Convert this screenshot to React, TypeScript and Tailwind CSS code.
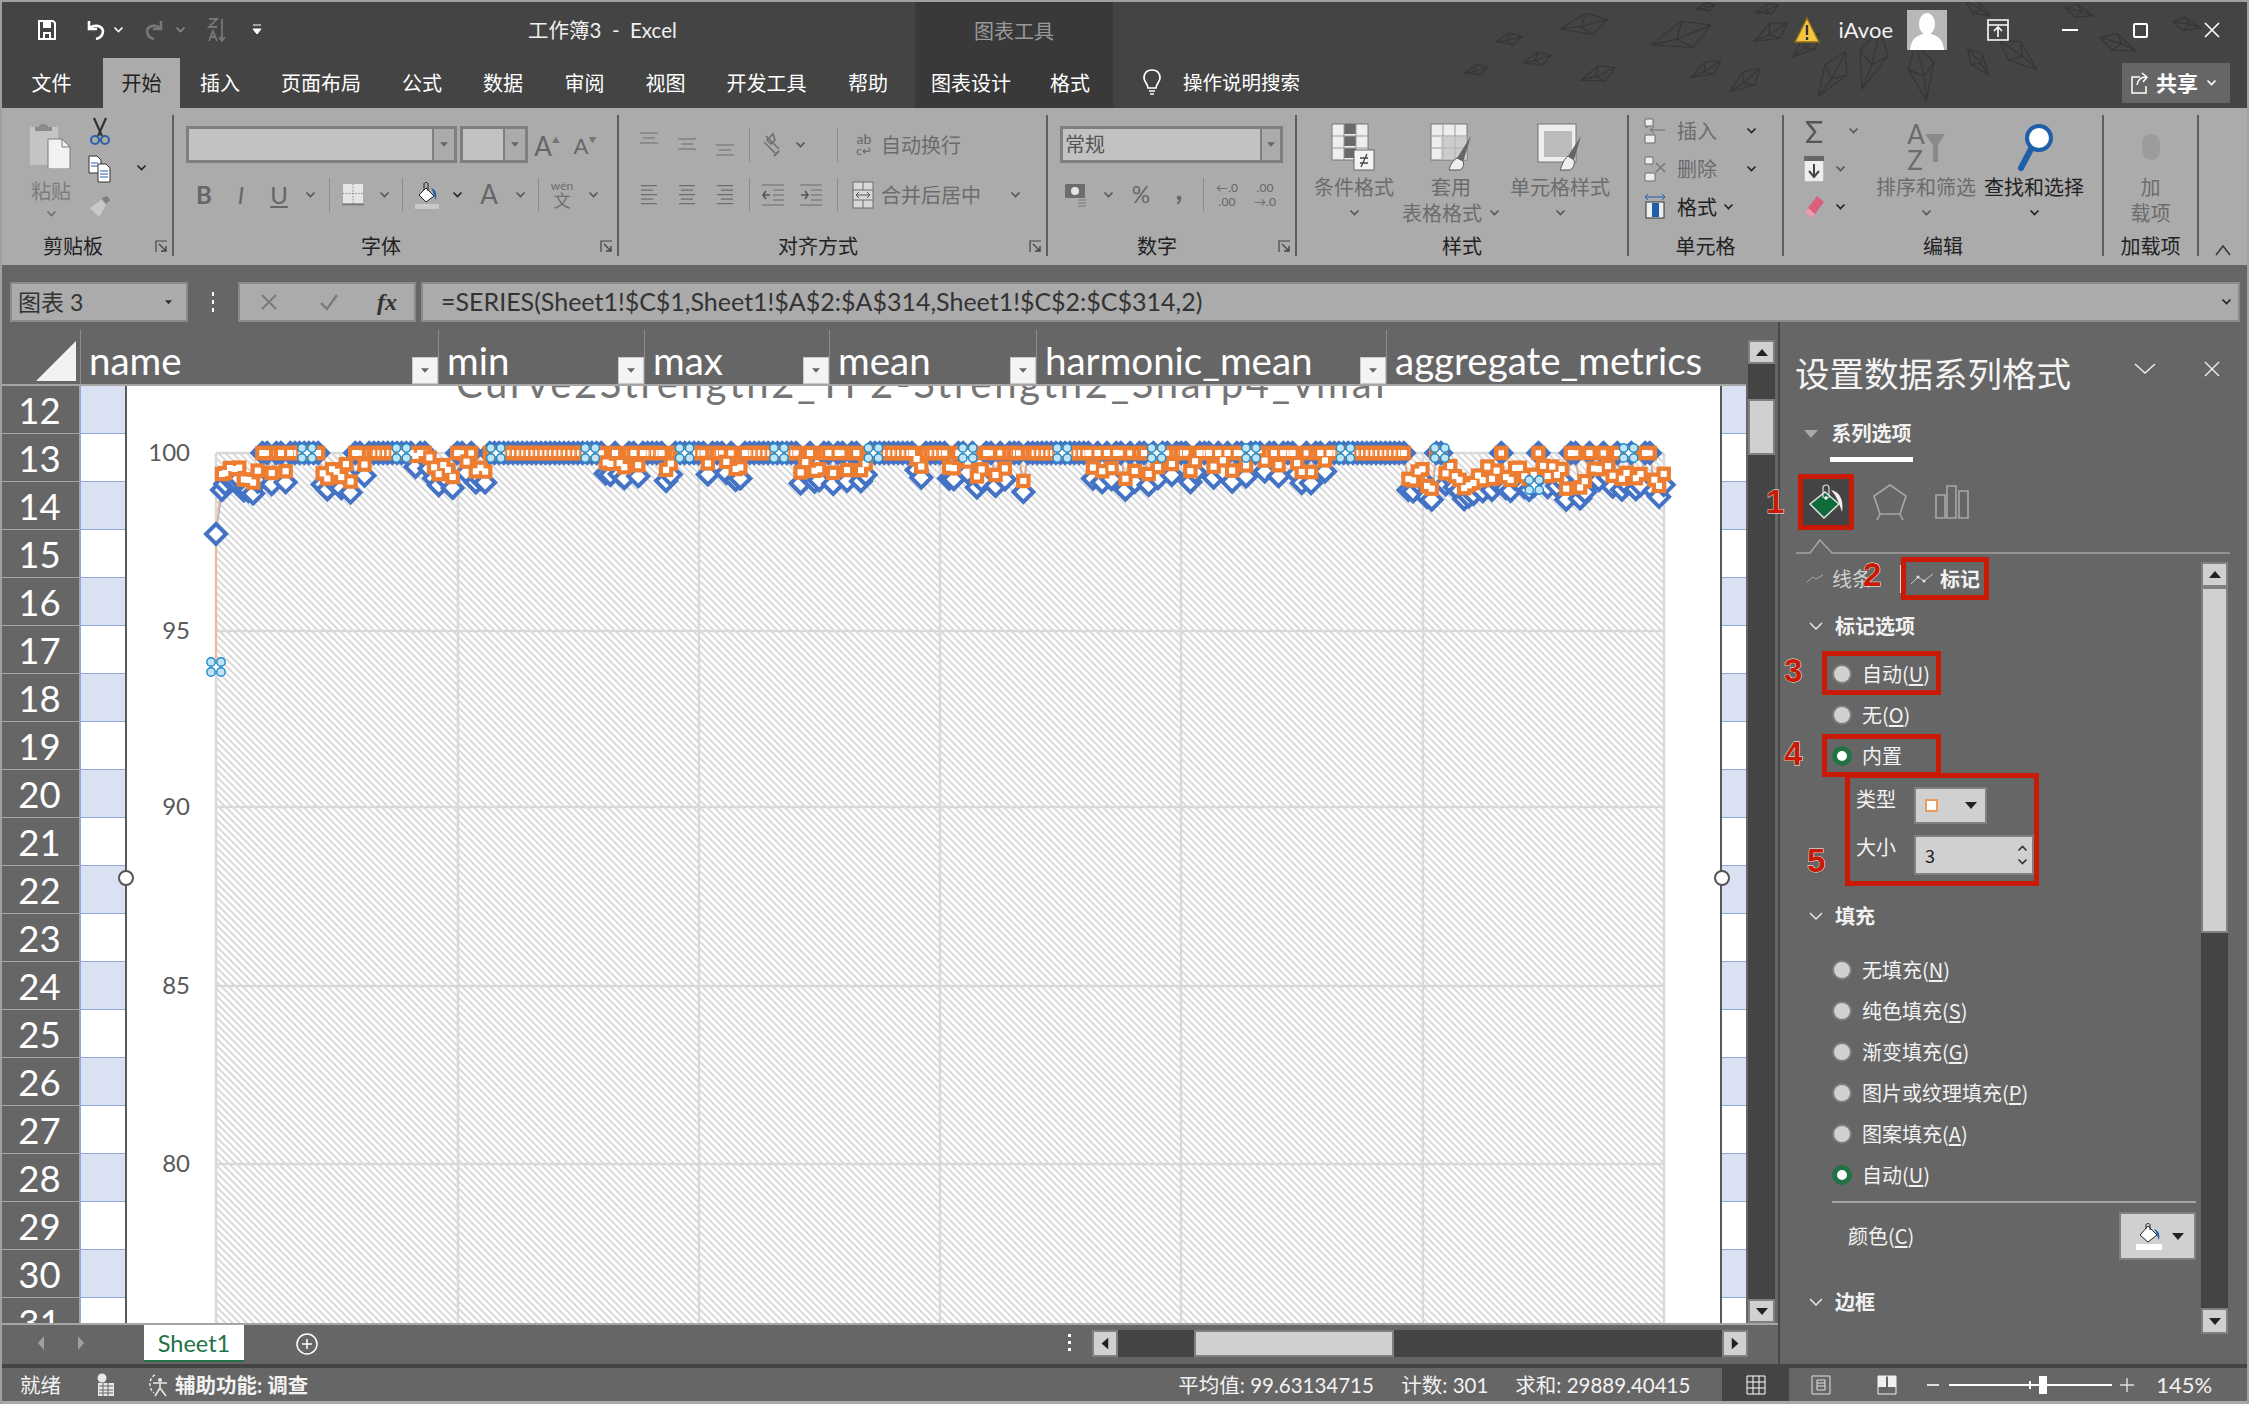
import type { ReactNode } from "react";

const DISABLED = "#6c6c6c";

const rowNumbers = Array.from({ length: 20 }, (_, i) => 12 + i);

const columns = [
  { name: "name", width: "w-[358px]", filter: true },
  { name: "min", width: "w-[206px]", filter: true },
  { name: "max", width: "w-[185px]", filter: true },
  { name: "mean", width: "w-[207px]", filter: true },
  { name: "harmonic_mean", width: "w-[350px]", filter: true },
  { name: "aggregate_metrics", width: "w-[360px]", filter: false },
];

const fillOptions = ["无填充(N)", "纯色填充(S)", "渐变填充(G)", "图片或纹理填充(P)", "图案填充(A)"];

// where the series dips below 100, in page pixels: [from, to, chance, max drop]
const dips: [number, number, number, number][] = [
  [222, 294, 0.75, 30],
  [318, 366, 0.6, 30],
  [413, 430, 0.3, 8],
  [430, 488, 0.55, 24],
  [602, 674, 0.45, 18],
  [695, 760, 0.45, 18],
  [796, 875, 0.5, 20],
  [889, 975, 0.45, 16],
  [975, 1032, 0.55, 30],
  [1083, 1176, 0.45, 26],
  [1190, 1334, 0.4, 20],
  [1398, 1664, 0.7, 36],
];

const rnd = (i: number) => {
  const v = Math.sin(i * 12.9898) * 43758.5453;
  return v - Math.floor(v);
};

const orange: [number, number][] = [];
const blue: [number, number][] = [];
for (let i = 0; i < 313; i++) {
  const x = 216 + i * 4.64;
  const dip = dips.find((d) => x >= d[0] && x <= d[1]);
  const drop = dip && rnd(i) < dip[2] ? dip[3] * (0.35 + 0.65 * rnd(i + 500)) : 0;
  orange.push([x, 453 + drop]);
  blue.push([x, 453 + (drop > 0 ? drop + 11 : 0)]);
}
blue[0] = [216, 534];
blue[1] = [222, 490];
orange[0] = [216, 534];
orange[1] = [222, 474];

const handleGroups = [[216, 667], ...Array.from({ length: 15 }, (_, k) => {
  const x = 307 + k * 94.4;
  return [x, k === 13 ? 485 : 453];
})];

// faint theme artwork behind the title bar: x, y, size
const crystals: [number, number, number][] = [
  [1584, 22, 20], [1681, 33, 26], [1509, 37, 11], [1537, 57, 12], [1476, 68, 10], [1598, 72, 15],
  [1706, 67, 14], [1745, 78, 16], [1771, 30, 16], [1806, 43, 15], [1832, 72, 22], [1871, 57, 26],
  [1921, 70, 24], [1978, 60, 14], [2018, 53, 20], [2118, 42, 16], [2079, 10, 12], [1978, 7, 12],
  [1767, 7, 10], [1706, 5, 8], [2187, 23, 12],
];

function Chev({ c = "#555555" }: { c?: string }) {
  return (
    <svg width="11" height="8" viewBox="0 0 11 8" className="shrink-0">
      <path d="M1.5 1.5 L5.5 5.5 L9.5 1.5" fill="none" stroke={c} strokeWidth="1.6" />
    </svg>
  );
}

function DownTri({ c = "#222222", w = 12 }: { c?: string; w?: number }) {
  return (
    <svg width={w} height={w / 2 + 1} viewBox="0 0 12 7" className="shrink-0">
      <path d="M0 0 H12 L6 7 Z" fill={c} />
    </svg>
  );
}

function Launcher({ c = "#444444" }: { c?: string }) {
  return (
    <svg width="13" height="13" viewBox="0 0 13 13" className="shrink-0">
      <path d="M1 12 V1 H12" fill="none" stroke={c} strokeWidth="1.2" />
      <path d="M4 4 L11 11 M11 6 V11 H6" fill="none" stroke={c} strokeWidth="1.4" />
    </svg>
  );
}

function AlignIcon({ kind, c = "#6c6c6c" }: { kind: "l" | "c" | "r"; c?: string }) {
  const rows = [
    [0, 16],
    [kind === "l" ? 0 : kind === "c" ? 2 : 4, 12],
    [0, 16],
    [kind === "l" ? 0 : kind === "c" ? 2 : 4, 12],
    [0, 16],
  ];
  return (
    <svg width="18" height="22" viewBox="0 0 18 22">
      {rows.map((r, i) => (
        <rect key={i} x={r[0] + 1} y={1 + i * 4.5} width={r[1]} height="1.2" fill={c} />
      ))}
    </svg>
  );
}

function VAlign({ offset }: { offset: number }) {
  return (
    <svg width="20" height="14" viewBox="0 0 20 14" style={{ marginTop: offset }}>
      <path d="M1 1 H19 M4 6 H16 M1 11 H19" stroke={DISABLED} strokeWidth="1.2" />
    </svg>
  );
}

function Cell({ className, children }: { className: string; children: ReactNode }) {
  return <div className={`flex shrink-0 items-center justify-center ${className}`}>{children}</div>;
}

function VRule() {
  return <div className="h-[34px] w-px shrink-0 bg-[#8c8c8c]" />;
}

function Group({ className, label, labelClass, launcher, children }: {
  className: string;
  label: string;
  labelClass?: string;
  launcher?: boolean;
  children: ReactNode;
}) {
  return (
    <div className={`flex h-full shrink-0 flex-col border-r-2 border-[#5e5e5e] ${className}`}>
      <div className="h-[121px]">{children}</div>
      <div className={`flex h-[20px] items-center text-[20px] leading-[20px] text-[#222222] ${labelClass ?? "justify-center"}`}>
        <span className="whitespace-nowrap">{label}</span>
        {launcher && (
          <span className="mr-[4px] ml-auto">
            <Launcher />
          </span>
        )}
      </div>
    </div>
  );
}

function BigButton({ className, lines, icon, dark }: {
  className: string;
  lines: ReactNode[];
  icon: ReactNode;
  dark?: boolean;
}) {
  return (
    <div className={`flex shrink-0 flex-col items-center pt-[8px] ${className}`}>
      <div className="flex h-[48px] items-center justify-center">{icon}</div>
      <div className={`mt-[3px] flex flex-col items-center text-[20px] leading-[26px] ${dark ? "text-[#222222]" : "text-[#6c6c6c]"}`}>
        {lines.map((l, i) => (
          <div key={i} className="flex h-[26px] items-center whitespace-nowrap">{l}</div>
        ))}
      </div>
    </div>
  );
}

function Combo({ className, children, split = "w-[22px]" }: { className: string; children?: ReactNode; split?: string }) {
  return (
    <div className={`flex h-[37px] shrink-0 border-[3px] border-[#7f7f7f] bg-[#c2c2c2] ${className}`}>
      <div className="flex-1 pl-[2px] text-[20px] leading-[31px] text-[#555555]">{children}</div>
      <div className={`flex items-center justify-center border-l-2 border-[#7f7f7f] bg-[#ababab] ${split}`}>
        <DownTri c="#666666" w={8} />
      </div>
    </div>
  );
}

function PaperIcon({ children }: { children: ReactNode }) {
  return (
    <svg width="48" height="50" viewBox="0 0 48 50">
      <rect x="4" y="2" width="36" height="36" fill="#eeeeee" stroke="#777777" />
      <path d="M4 14 H40 M4 26 H40 M16 2 V38 M28 2 V38" stroke="#999999" />
      {children}
    </svg>
  );
}

function Crystals() {
  return (
    <svg width="760" height="108" viewBox="1450 0 760 108" className="pointer-events-none absolute top-0 left-[1450px]">
      {crystals.map(([x, y, s], i) => {
        const deg = (Math.atan2(x - 1900, y + 40) * -180) / Math.PI;
        return (
          <g
            key={i}
            transform={`translate(${x} ${y}) rotate(${deg}) scale(${s / 20})`}
            fill="none"
            stroke="#363636"
            strokeWidth={24 / s}
          >
            <path d="M0 -24 L12 -6 L0 24 L-10 -4 Z M0 -24 L2 4 L0 24 M-10 -4 L2 4 L12 -6" />
          </g>
        );
      })}
    </svg>
  );
}

function TitleBar() {
  return (
    <div className="relative flex h-[56px] shrink-0 items-center text-white">
      <div className="flex h-full w-[915px] shrink-0 items-center">
        <Cell className="ml-[36px] w-[22px]">
          <svg width="20" height="22" viewBox="0 0 20 22">
            <path d="M2 2 H16 L18 4 V20 H2 Z" fill="none" stroke="#fff" strokeWidth="2" />
            <path d="M6 3 H14 V9 H6 Z" fill="#fff" />
            <path d="M7 20 V14 H13 V20" fill="none" stroke="#fff" strokeWidth="2" />
          </svg>
        </Cell>
        <Cell className="ml-[25px] w-[24px]">
          <svg width="24" height="24" viewBox="0 0 24 24">
            <path d="M6 3 V11 H14 M6 11 C10 6 19 7 20 13 C20 17 17 20 13 21" fill="none" stroke="#fff" strokeWidth="2.6" />
          </svg>
        </Cell>
        <Cell className="ml-[3px] w-[16px]"><Chev c="#ffffff" /></Cell>
        <Cell className="ml-[16px] w-[26px]">
          <svg width="24" height="24" viewBox="0 0 24 24">
            <path d="M18 3 V11 H10 M18 11 C14 6 5 7 4 13 C4 17 7 20 11 21" fill="none" stroke="#777777" strokeWidth="2.6" />
          </svg>
        </Cell>
        <Cell className="ml-[4px] w-[16px]"><Chev c="#888888" /></Cell>
        <Cell className="ml-[17px] w-[24px]">
          <svg width="22" height="26" viewBox="0 0 22 26">
            <path d="M3 2 H11 L3 10 H11 M3 24 L7 14 L11 24 M5 20 H9 M16 2 V24 M13 20 L16 24 L19 20" fill="none" stroke="#777777" strokeWidth="1.8" />
          </svg>
        </Cell>
        <Cell className="ml-[22px] w-[12px]">
          <svg width="10" height="12" viewBox="0 0 10 12">
            <path d="M1 1 H9 M1 5 H9 L5 10 Z" fill="#fff" stroke="#fff" strokeWidth="1" />
          </svg>
        </Cell>
        <span className="ml-[265px] text-[20.5px] whitespace-nowrap text-[#f0f0f0]">工作簿3&nbsp; -&nbsp; Excel</span>
      </div>
      <div className="flex h-full w-[198px] shrink-0 items-center justify-center rounded-t-[1px] bg-[#393939] pt-[2px] text-[20px] text-[#9a9a9a]">
        图表工具
      </div>
      <div className="flex-1" />
      <svg width="30" height="30" viewBox="0 0 30 30" className="mr-[17px]">
        <path d="M15 3 L27 27 H3 Z" fill="#f5c542" stroke="#8a6d1a" strokeWidth="1.5" />
        <path d="M15 10 V20 M15 22 V25" stroke="#333" strokeWidth="2.4" />
      </svg>
      <span className="text-[22px] leading-[26px] whitespace-nowrap text-[#f2f2f2]">iAvoe</span>
      <div className="ml-[14px] flex h-[40px] w-[40px] items-end justify-center overflow-hidden bg-[#b8b8b8]">
        <svg width="36" height="38" viewBox="0 0 36 38">
          <ellipse cx="18" cy="12" rx="8" ry="11" fill="#fff" />
          <path d="M1 38 C2 26 8 24 14 22 H22 C28 24 34 26 35 38 Z" fill="#fff" />
        </svg>
      </div>
      <Cell className="ml-[38px] w-[26px]">
        <svg width="24" height="24" viewBox="0 0 24 24">
          <path d="M2 2 H22 V22 H2 Z M2 7 H22" fill="none" stroke="#fff" strokeWidth="1.6" />
          <path d="M12 19 V10 M8 13 L12 9 L16 13" fill="none" stroke="#fff" strokeWidth="1.6" />
        </svg>
      </Cell>
      <Cell className="ml-[48px] w-[22px]">
        <div className="h-[2px] w-[16px] bg-white" />
      </Cell>
      <Cell className="ml-[48px] w-[22px]">
        <div className="h-[15px] w-[15px] rounded-[2px] border-2 border-white" />
      </Cell>
      <Cell className="mr-[26px] ml-[50px] w-[22px]">
        <svg width="18" height="18" viewBox="0 0 18 18">
          <path d="M2 2 L16 16 M16 2 L2 16" stroke="#fff" strokeWidth="1.6" />
        </svg>
      </Cell>
    </div>
  );
}

function TabBar() {
  const tab = "flex h-full shrink-0 items-center justify-center text-[20px] leading-[24px] text-white";
  return (
    <div className="relative flex h-[50px] shrink-0">
      <div className={`${tab} w-[103px]`}>文件</div>
      <div className={`${tab} w-[77px] bg-[#ababab] !text-[#222222]`}>开始</div>
      <div className={`${tab} w-[80px]`}>插入</div>
      <div className={`${tab} w-[122px]`}>页面布局</div>
      <div className={`${tab} w-[80px]`}>公式</div>
      <div className={`${tab} w-[82px]`}>数据</div>
      <div className={`${tab} w-[81px]`}>审阅</div>
      <div className={`${tab} w-[81px]`}>视图</div>
      <div className={`${tab} w-[121px]`}>开发工具</div>
      <div className={`${tab} w-[82px]`}>帮助</div>
      <div className="w-[6px] shrink-0" />
      <div className="flex h-full shrink-0 bg-[#393939]">
        <div className={`${tab} w-[112px]`}>图表设计</div>
        <div className={`${tab} w-[86px]`}>格式</div>
      </div>
      <svg width="22" height="30" viewBox="0 0 22 30" className="mt-[10px] ml-[28px] shrink-0">
        <path d="M11 2 C5 2 3 6 3 10 C3 14 7 16 7 20 H15 C15 16 19 14 19 10 C19 6 17 2 11 2 Z M8 23 H14 M9 26 H13" fill="none" stroke="#fff" strokeWidth="1.7" />
      </svg>
      <span className="ml-[20px] self-center text-[19.5px] leading-[24px] whitespace-nowrap text-white">操作说明搜索</span>
      <div className="flex-1" />
      <div className="mt-[5px] mr-[19px] flex h-[40px] w-[108px] items-center bg-[#666666] pl-[8px]">
        <svg width="20" height="24" viewBox="0 0 20 24">
          <path d="M10 6 H2 V22 H16 V15 M7 14 C8 8 11 6 16 6 M12 2 L17 6 L13 11" fill="none" stroke="#fff" strokeWidth="1.5" />
        </svg>
        <span className="ml-[6px] text-[21px] leading-[24px] font-bold text-white">共享</span>
        <span className="ml-[8px]"><Chev c="#ffffff" /></span>
      </div>
    </div>
  );
}

function Ribbon() {
  const smallText = "text-[20px] leading-[24px] text-[#6c6c6c] whitespace-nowrap";
  return (
    <div className="flex h-[157px] shrink-0 bg-[#ababab] pt-[7px] pb-[9px]">
      <Group className="w-[174px]" label="剪贴板" labelClass="pl-[43px]" launcher>
        <div className="flex">
          <div className="ml-[28px] flex w-[46px] flex-col items-center pt-[8px]">
            <svg width="44" height="46" viewBox="0 0 44 46">
              <rect x="1" y="4" width="28" height="38" rx="1" fill="#c4c4c4" />
              <path d="M10 4 C10 0 19 0 19 4 H23 V8 H6 V4 Z" fill="#8a8a8a" />
              <path d="M19 16 H33 L41 24 V46 H19 Z" fill="#f2f2f2" stroke="#7a7a7a" />
              <path d="M33 16 V24 H41" fill="none" stroke="#7a7a7a" />
            </svg>
            <span className="mt-[9px] text-[20px] leading-[26px] text-[#7c7c7c]">粘贴</span>
            <span className="mt-[6px]"><Chev c="#6e6e6e" /></span>
          </div>
          <div className="ml-[4px] flex w-[44px] flex-col">
            <Cell className="-mt-[3px] h-[38px]">
              <svg width="24" height="30" viewBox="0 0 24 30">
                <path d="M6 2 L14 20 M18 2 L10 20" stroke="#333" strokeWidth="2.2" />
                <circle cx="7" cy="24" r="4" fill="none" stroke="#2a5fa5" strokeWidth="2" />
                <circle cx="17" cy="24" r="4" fill="none" stroke="#2a5fa5" strokeWidth="2" />
              </svg>
            </Cell>
            <Cell className="h-[38px]">
              <svg width="24" height="28" viewBox="0 0 24 28">
                <path d="M1 1 H9 L13 5 V18 H1 Z" fill="#fff" stroke="#333" />
                <path d="M3 8 H10 M3 11 H10" stroke="#2a5fa5" />
                <path d="M10 9 H18 L22 13 V27 H10 Z" fill="#fff" stroke="#333" />
                <path d="M12 16 H20 M12 19 H20 M12 22 H20" stroke="#2a5fa5" />
              </svg>
            </Cell>
            <Cell className="h-[38px]">
              <svg width="24" height="24" viewBox="0 0 24 24">
                <path d="M14 3 L19 1 L22 5 L18 9 Z" fill="#7c7c7c" />
                <path d="M13 5 L18 10 L11 22 L2 13 Z" fill="#c9c9c9" />
              </svg>
            </Cell>
          </div>
          <Cell className="mt-[34px] ml-[10px] h-[38px] w-[18px]"><Chev c="#222222" /></Cell>
        </div>
      </Group>

      <Group className="w-[445px]" label="字体" labelClass="pl-[187px]" launcher>
        <div className="pt-[11px]">
          <div className="flex h-[37px] items-center pl-[12px]">
            <Combo className="w-[271px]" />
            <Combo className="ml-[3px] w-[68px]" />
            <Cell className="w-[38px] pt-[2px]">
              <span className="text-[26px] leading-[26px] text-[#666666]">A</span>
              <span className="-mt-[12px] text-[8px] text-[#777777]">▲</span>
            </Cell>
            <Cell className="w-[38px] pt-[2px]">
              <span className="text-[22px] leading-[26px] text-[#666666]">A</span>
              <span className="-mt-[12px] text-[8px] text-[#777777]">▼</span>
            </Cell>
          </div>
          <div className="mt-[13px] flex h-[37px] items-center pl-[12px]">
            <Cell className="w-[36px] text-[24px] font-bold text-[#666666]">B</Cell>
            <Cell className="w-[38px] text-[24px] text-[#666666] italic">I</Cell>
            <Cell className="w-[38px] text-[24px] text-[#666666] underline underline-offset-2">U</Cell>
            <Cell className="w-[24px]"><Chev /></Cell>
            <div className="w-[7px] shrink-0" />
            <VRule />
            <Cell className="w-[46px]">
              <svg width="22" height="24" viewBox="0 0 22 24">
                <rect x="1" y="1" width="20" height="19" fill="#e6e6e6" />
                <path d="M1 10.5 H21 M11 1 V20" stroke="#8a8a8a" strokeDasharray="1.5 1.5" />
                <path d="M0 21.5 H22" stroke="#777" strokeWidth="1.5" />
              </svg>
            </Cell>
            <Cell className="w-[16px]"><Chev /></Cell>
            <div className="w-[10px] shrink-0" />
            <VRule />
            <Cell className="w-[48px]">
              <svg width="26" height="28" viewBox="0 0 26 28">
                <path d="M12 7 L20 15 L12 21 L5 14 Z" fill="#fff" stroke="#222" />
                <path d="M10 9 V3 C10 1 14 1 14 3 V10" fill="none" stroke="#222" />
                <path d="M17 7 C22 9 23 12 22 19 C20 15 20 12 17 7" fill="#1f5fa8" />
                <rect x="1" y="23" width="24" height="5" fill="#c9c9c9" />
              </svg>
            </Cell>
            <Cell className="w-[12px]"><Chev c="#222222" /></Cell>
            <Cell className="w-[52px] text-[26px] text-[#666666]">A</Cell>
            <Cell className="w-[10px]"><Chev /></Cell>
            <div className="w-[13px] shrink-0" />
            <VRule />
            <Cell className="w-[46px]">
              <div className="flex flex-col items-center text-[#6e6e6e]">
                <span className="text-[12px] leading-[12px]">wén</span>
                <span className="text-[17px] leading-[17px]">文</span>
              </div>
            </Cell>
            <Cell className="w-[16px]"><Chev /></Cell>
          </div>
        </div>
      </Group>

      <Group className="w-[429px]" label="对齐方式" labelClass="pl-[159px]" launcher>
        <div className="pt-[11px]">
          <div className="flex h-[37px] items-center pl-[11px]">
            <Cell className="w-[38px] self-start"><VAlign offset={6} /></Cell>
            <Cell className="w-[38px] self-start"><VAlign offset={12} /></Cell>
            <Cell className="w-[38px] self-start"><VAlign offset={18} /></Cell>
            <div className="w-[5px] shrink-0" />
            <VRule />
            <Cell className="w-[46px]">
              <svg width="24" height="26" viewBox="0 0 24 26">
                <path d="M5 4 L18 17 M3 10 L14 21" stroke="#6c6c6c" strokeWidth="1.4" />
                <path d="M6 8 L12 2 L14 8 L10 12 Z" fill="none" stroke="#6c6c6c" strokeWidth="1.5" />
                <path d="M18 19 L13 24" stroke="#6c6c6c" strokeWidth="1.8" />
              </svg>
            </Cell>
            <Cell className="w-[8px]"><Chev /></Cell>
            <div className="w-[33px] shrink-0" />
            <VRule />
            <Cell className="ml-[15px] w-[22px] flex-col">
              <span className="text-[14px] leading-[13px] text-[#666666]">ab</span>
              <span className="text-[12px] leading-[12px] text-[#666666]">c↵</span>
            </Cell>
            <span className={`ml-[6px] ${smallText}`}>自动换行</span>
          </div>
          <div className="mt-[13px] flex h-[37px] items-center pl-[11px]">
            <Cell className="w-[38px]"><AlignIcon kind="l" /></Cell>
            <Cell className="w-[38px]"><AlignIcon kind="c" /></Cell>
            <Cell className="w-[38px]"><AlignIcon kind="r" /></Cell>
            <div className="w-[5px] shrink-0" />
            <VRule />
            <Cell className="ml-[4px] w-[38px]">
              <svg width="22" height="22" viewBox="0 0 22 22">
                <path d="M0 1 H22 M11 6 H22 M11 11 H22 M11 16 H22 M0 21 H22" stroke="#6c6c6c" strokeWidth="1.2" />
                <path d="M8 11 H1 M4 7 L1 11 L4 15" fill="none" stroke="#555" strokeWidth="1.6" />
              </svg>
            </Cell>
            <Cell className="w-[38px]">
              <svg width="22" height="22" viewBox="0 0 22 22">
                <path d="M0 1 H22 M11 6 H22 M11 11 H22 M11 16 H22 M0 21 H22" stroke="#6c6c6c" strokeWidth="1.2" />
                <path d="M1 11 H8 M5 7 L8 11 L5 15" fill="none" stroke="#555" strokeWidth="1.6" />
              </svg>
            </Cell>
            <div className="w-[7px] shrink-0" />
            <VRule />
            <Cell className="ml-[14px] w-[22px]">
              <svg width="22" height="28" viewBox="0 0 22 28">
                <rect x="1" y="1" width="20" height="26" fill="#d8d8d8" stroke="#6c6c6c" />
                <path d="M1 9 H21 M1 19 H21 M11 1 V9 M11 19 V27" stroke="#6c6c6c" />
                <path d="M4 14 H18 M7 11 L4 14 L7 17 M15 11 L18 14 L15 17" fill="none" stroke="#555" />
              </svg>
            </Cell>
            <span className={`ml-[7px] w-[100px] ${smallText}`}>合并后居中</span>
            <Cell className="ml-[30px] w-[8px]"><Chev /></Cell>
          </div>
        </div>
      </Group>

      <Group className="w-[249px]" label="数字" labelClass="pl-[89px]" launcher>
        <div className="pt-[11px]">
          <div className="flex h-[37px] items-center pl-[12px]">
            <Combo className="w-[223px]" split="w-[20px]">常规</Combo>
          </div>
          <div className="mt-[13px] flex h-[37px] items-center pl-[12px]">
            <Cell className="w-[32px]">
              <svg width="24" height="24" viewBox="0 0 24 24">
                <rect x="1" y="1" width="20" height="14" rx="1" fill="#6c6c6c" />
                <circle cx="11" cy="8" r="4" fill="#e4e4e4" />
                <path d="M14 17 H22 M14 20 H22 M14 23 H22" stroke="#8a8a8a" strokeWidth="1.6" />
              </svg>
            </Cell>
            <Cell className="w-[32px]"><Chev /></Cell>
            <Cell className="w-[34px] text-[23px] text-[#666666]">%</Cell>
            <Cell className="-mt-[12px] w-[42px] text-[30px] font-bold text-[#666666]">,</Cell>
            <div className="w-[3px] shrink-0" />
            <VRule />
            <Cell className="w-[46px] flex-col text-[12px] leading-[14px] text-[#666666]">
              <span>←.0</span>
              <span>.00</span>
            </Cell>
            <Cell className="w-[30px] flex-col text-[12px] leading-[14px] text-[#666666]">
              <span>.00</span>
              <span>→.0</span>
            </Cell>
          </div>
        </div>
      </Group>

      <Group className="w-[332px]" label="样式">
        <div className="flex pl-[15px]">
          <BigButton
            className="w-[84px]"
            lines={["条件格式", <Chev key="c" />]}
            icon={
              <svg width="48" height="50" viewBox="0 0 48 50">
                <rect x="2" y="2" width="36" height="36" fill="#eeeeee" stroke="#777777" />
                <path d="M14 2 H26 V12 H14 Z M14 14 H26 V24 H14 Z M14 26 H26 V36 H14 Z" fill="#6a6a6a" />
                <path d="M2 14 H38 M2 26 H38 M14 2 V38 M26 2 V38" stroke="#999999" />
                <rect x="24" y="28" width="20" height="20" fill="#f4f4f4" stroke="#666666" />
                <path d="M30 36 H38 M30 41 H38 M37 32 L31 45" stroke="#444" strokeWidth="1.3" />
              </svg>
            }
          />
          <BigButton
            className="w-[110px]"
            lines={[
              "套用",
              <span key="t" className="flex items-center gap-[7px]">表格格式<Chev /></span>,
            ]}
            icon={
              <PaperIcon>
                <rect x="14" y="14" width="26" height="24" fill="#bdbdbd" opacity="0.7" />
                <path d="M44 14 L30 36 L36 40 Z" fill="#666666" />
                <path d="M30 36 C25 39 23 44 22 48 L33 48 C37 46 37 41 36 39 Z" fill="#eeeeee" stroke="#555" />
              </PaperIcon>
            }
          />
          <BigButton
            className="w-[108px]"
            lines={["单元格样式", <Chev key="c" />]}
            icon={
              <svg width="48" height="50" viewBox="0 0 48 50">
                <rect x="2" y="2" width="38" height="38" fill="#eeeeee" stroke="#777777" />
                <rect x="8" y="9" width="28" height="26" fill="#bcbcbc" />
                <path d="M45 14 L32 34 L38 38 Z" fill="#666666" />
                <path d="M32 34 C27 38 26 44 24 48 L34 48 C38 46 39 41 38 38 Z" fill="#eeeeee" stroke="#555" />
              </svg>
            }
          />
        </div>
      </Group>

      <Group className="w-[155px]" label="单元格">
        <div className="-mt-[3px] pl-[15px]">
          <div className="flex h-[38px] items-center">
            <Cell className="w-[22px]">
              <svg width="22" height="26" viewBox="0 0 22 26">
                <path d="M1 1 H9 V8 H1 Z M1 17 H11 V25 H1 Z M1 9 H4" fill="#eeeeee" stroke="#6c6c6c" />
                <path d="M6 12 H21 M10 9 L6 12 L10 15" fill="none" stroke="#6c6c6c" />
              </svg>
            </Cell>
            <span className={`ml-[11px] w-[41px] ${smallText}`}>插入</span>
            <Cell className="ml-[29px] w-[8px]"><Chev c="#222222" /></Cell>
          </div>
          <div className="flex h-[38px] items-center">
            <Cell className="w-[22px]">
              <svg width="22" height="26" viewBox="0 0 22 26">
                <path d="M1 1 H9 V8 H1 Z M1 17 H11 V25 H1 Z" fill="#eeeeee" stroke="#6c6c6c" />
                <path d="M12 7 L21 16 M21 7 L12 16" stroke="#777" strokeWidth="1.5" />
              </svg>
            </Cell>
            <span className={`ml-[11px] w-[41px] ${smallText}`}>删除</span>
            <Cell className="ml-[29px] w-[8px]"><Chev c="#222222" /></Cell>
          </div>
          <div className="flex h-[38px] items-center">
            <Cell className="w-[22px]">
              <svg width="22" height="28" viewBox="0 0 22 28">
                <path d="M1 4 H21 M4 1 L1 4 L4 7 M18 1 L21 4 L18 7" fill="none" stroke="#1f5fa8" />
                <rect x="2" y="9" width="18" height="16" fill="#eeeeee" stroke="#333" />
                <rect x="8" y="10" width="7" height="14" fill="#1f5fa8" />
              </svg>
            </Cell>
            <span className="ml-[11px] text-[20px] leading-[24px] whitespace-nowrap text-[#222222]">格式</span>
            <Cell className="ml-[7px] w-[8px]"><Chev c="#222222" /></Cell>
          </div>
        </div>
      </Group>

      <Group className="w-[320px]" label="编辑">
        <div className="flex">
          <div className="-mt-[3px] w-[88px] pl-[16px]">
            <div className="flex h-[38px] items-center">
              <Cell className="w-[28px] text-[30px] leading-[30px] text-[#555555]">Σ</Cell>
              <Cell className="ml-[21px] w-[8px]"><Chev /></Cell>
            </div>
            <div className="flex h-[38px] items-center">
              <Cell className="w-[28px]">
                <svg width="20" height="26" viewBox="0 0 20 26">
                  <rect x="0" y="0" width="20" height="26" fill="#eeeeee" stroke="#888888" />
                  <rect x="0" y="0" width="20" height="5" fill="#666666" />
                  <path d="M10 8 V20 M5 15 L10 21 L15 15" fill="none" stroke="#444" strokeWidth="2" />
                </svg>
              </Cell>
              <Cell className="ml-[8px] w-[8px]"><Chev /></Cell>
            </div>
            <div className="flex h-[38px] items-center">
              <Cell className="w-[28px]">
                <svg width="22" height="24" viewBox="0 0 22 24">
                  <path d="M14 1 L21 7 L9 23 L2 17 Z" fill="#d9607a" />
                  <path d="M5 13 L12 19 L9 23 L2 17 Z" fill="#e8a0b0" />
                </svg>
              </Cell>
              <Cell className="ml-[8px] w-[8px]"><Chev c="#222222" /></Cell>
            </div>
          </div>
          <BigButton
            className="w-[108px]"
            lines={["排序和筛选", <Chev key="c" />]}
            icon={
              <div className="flex items-center">
                <div className="flex flex-col text-[26px] leading-[26px] text-[#6c6c6c]">
                  <span>A</span>
                  <span>Z</span>
                </div>
                <svg width="20" height="30" viewBox="0 0 20 30">
                  <path d="M0 2 H20 L13 13 V30 H8 V13 Z" fill="#8a8a8a" />
                </svg>
              </div>
            }
          />
          <BigButton
            className="w-[108px]"
            dark
            lines={["查找和选择", <Chev key="c" c="#222222" />]}
            icon={
              <svg width="42" height="50" viewBox="0 0 42 50">
                <circle cx="26" cy="16" r="12" fill="#fff" stroke="#1f5fa8" strokeWidth="4" />
                <path d="M18 27 L8 46" stroke="#1f5fa8" strokeWidth="6" strokeLinecap="round" />
              </svg>
            }
          />
        </div>
      </Group>

      <Group className="w-[95px]" label="加载项">
        <BigButton
          className="w-full"
          lines={["加", "载项"]}
          icon={<div className="h-[26px] w-[18px] rounded-full bg-[#9c9c9c]" />}
        />
      </Group>

      <div className="flex flex-1 items-end justify-center pr-[2px]">
        <svg width="18" height="12" viewBox="0 0 18 12">
          <path d="M2 11 L9 2 L16 11" fill="none" stroke="#333" strokeWidth="1.4" />
        </svg>
      </div>
    </div>
  );
}

function FormulaBar() {
  return (
    <div className="flex h-[57px] shrink-0 items-start pt-[17px] pl-[10px]">
      <div className="flex h-[40px] w-[178px] items-center border-2 border-[#8a8a8a] bg-[#ababab] pr-[14px] pl-[6px] text-[23px] text-[#333333]">
        <span className="flex-1">图表 3</span>
        <DownTri c="#333333" w={7} />
      </div>
      <div className="flex h-[40px] w-[50px] flex-col items-center justify-center gap-[4px]">
        <i className="h-[4px] w-[2px] bg-white" />
        <i className="h-[4px] w-[2px] bg-white" />
        <i className="h-[4px] w-[2px] bg-white" />
      </div>
      <div className="flex h-[40px] w-[178px] items-center border-2 border-[#8a8a8a] bg-[#ababab] text-[#757575]">
        <Cell className="ml-[16px] w-[26px]">
          <svg width="18" height="18" viewBox="0 0 18 18">
            <path d="M2 2 L16 16 M16 2 L2 16" stroke="#7a7a7a" strokeWidth="2" />
          </svg>
        </Cell>
        <Cell className="ml-[34px] w-[26px]">
          <svg width="20" height="18" viewBox="0 0 20 18">
            <path d="M2 10 L8 16 L18 2" fill="none" stroke="#7a7a7a" strokeWidth="2.4" />
          </svg>
        </Cell>
        <Cell className="ml-[32px] w-[26px] font-['Liberation_Serif',serif] text-[24px] font-bold text-[#333333] italic">fx</Cell>
      </div>
      <div className="ml-[5px] flex h-[40px] w-[1819px] items-center border-2 border-[#8a8a8a] bg-[#ababab] pr-[6px] pl-[18px] text-[25px] text-[#333333]">
        <span className="flex-1 whitespace-nowrap">=SERIES(Sheet1!$C$1,Sheet1!$A$2:$A$314,Sheet1!$C$2:$C$314,2)</span>
        <Chev c="#222222" />
      </div>
    </div>
  );
}

function ColumnHeaders() {
  return (
    <div className="flex h-[64px] shrink-0 items-end border-b-2 border-[#a6a6a6] pt-[8px]">
      <div className="flex h-full w-[80px] shrink-0 items-end justify-end pr-[3px] pb-[2px]">
        <svg width="42" height="42" viewBox="0 0 42 42">
          <path d="M41 1 V41 H1 Z" fill="#f2f2f2" />
        </svg>
      </div>
      {columns.map((col) => (
        <div
          key={col.name}
          className={`flex h-full shrink-0 items-end justify-between border-l border-[#8c8c8c] pl-[8px] ${col.width}`}
        >
          <span className="pb-[2px] text-[38.5px] leading-[44px] whitespace-nowrap text-white">{col.name}</span>
          {col.filter && (
            <div className="flex h-[27px] w-[26px] shrink-0 items-center justify-center border border-[#c9c9c9] bg-[#f4f4f6]">
              <DownTri c="#666666" w={8} />
            </div>
          )}
        </div>
      ))}
    </div>
  );
}

function ChartMarkers() {
  const isFlat = (i: number) => orange[i] && orange[i][1] === 453;
  return (
    <>
      <polyline
        points={blue.map((p) => p.join(",")).join(" ")}
        fill="none"
        stroke="#8fa9dc"
        strokeWidth="1.5"
      />
      <polyline
        points={[[216, 667], ...orange].map((p) => p.join(",")).join(" ")}
        fill="none"
        stroke="#f4b183"
        strokeWidth="1.5"
      />
      {blue.map(([x, y], i) => (
        <path
          key={i}
          d={`M${x} ${y - 10} L${x + 10} ${y} L${x} ${y + 10} L${x - 10} ${y} Z`}
          fill="#fff"
          stroke="#4472c4"
          strokeWidth="4"
        />
      ))}
      {orange.slice(1).map(([x, y], i) => (
        <rect key={i} x={x - 5} y={y - 5} width="10" height="10" fill="#fff" stroke="#ed7d31" strokeWidth="4.5" />
      ))}
      {/* white centres: the later squares hide them, so put them back on top */}
      {orange.slice(1).map(([x, y], n) => {
        const i = n + 1;
        if (isFlat(i) && isFlat(i - 1) && isFlat(i + 1)) {
          return <rect key={i} x={x - 1} y={y - 3} width="2" height="6" fill="#fff" />;
        }
        if (isFlat(i) && i % 2 === 1) return null;
        return <rect key={i} x={x - 3} y={y - 3} width="6" height="6" fill="#fff" />;
      })}
      {handleGroups.map(([x, y], i) => (
        <g key={i} fill="#bfe3f7" stroke="#1f8ac8" strokeWidth="1.4">
          <rect x={x - 3} y={y - 3} width="6" height="6" fill="#fff" stroke="none" />
          <circle cx={x - 5} cy={y - 5} r="4.2" />
          <circle cx={x + 5} cy={y - 5} r="4.2" />
          <circle cx={x - 5} cy={y + 5} r="4.2" />
          <circle cx={x + 5} cy={y + 5} r="4.2" />
        </g>
      ))}
    </>
  );
}

function Chart() {
  const gridY = [453, 631, 807, 986, 1164];
  const gridX = [216, 458, 699, 940, 1181, 1423, 1664];
  const axis = [
    [453, "100"],
    [631, "95"],
    [807, "90"],
    [986, "85"],
    [1164, "80"],
  ] as const;
  return (
    <div className="absolute top-0 left-[125px] h-[937px] w-[1597px]">
      <svg width="1597" height="937" viewBox="125 386 1597 937" className="block overflow-visible">
        <defs>
          <pattern id="hatch" width="5" height="5" patternUnits="userSpaceOnUse" patternTransform="rotate(45)">
            <rect width="5" height="5" fill="#ffffff" />
            <rect width="5" height="2" fill="#d9d9d9" />
          </pattern>
        </defs>
        <rect x="126" y="386" width="1595" height="937" fill="#ffffff" />
        <rect x="216" y="453" width="1448" height="870" fill="url(#hatch)" />
        {gridY.map((y) => (
          <line key={y} x1="216" x2="1664" y1={y} y2={y} stroke="#d9d9d9" strokeWidth="2.5" />
        ))}
        {gridX.map((x) => (
          <line key={x} x1={x} x2={x} y1="453" y2="1323" stroke="#d9d9d9" strokeWidth="2.5" />
        ))}
        <text x="456" y="398" textLength="932" fill="#757575" fontSize="40" fontFamily="Lato, sans-serif">
          Curve2Strength2_TF2-Strength2_Sharp4_vmaf
        </text>
        {axis.map(([y, t]) => (
          <text key={t} x="190" y={y + 8} textAnchor="end" fill="#595959" fontSize="24" fontFamily="Lato, sans-serif">
            {t}
          </text>
        ))}
        <ChartMarkers />
        <line x1="126" x2="126" y1="386" y2="1323" stroke="#595959" strokeWidth="2" />
        <line x1="1721" x2="1721" y1="386" y2="1323" stroke="#595959" strokeWidth="2" />
        <circle cx="126" cy="878" r="7" fill="#ffffff" stroke="#555555" strokeWidth="2" />
        <circle cx="1722" cy="878" r="7" fill="#ffffff" stroke="#555555" strokeWidth="2" />
      </svg>
    </div>
  );
}

function SheetGrid() {
  return (
    <div className="relative flex-1 overflow-hidden">
      {rowNumbers.map((n, i) => (
        <div key={n} className="flex h-[48px]">
          <div className="flex h-full w-[80px] shrink-0 items-center justify-center border-r border-b border-[#a6a6a6] text-[36.5px] leading-[44px] text-white">
            {n}
          </div>
          <div
            className={`h-full flex-1 border-b border-l border-[#8ea9db] ${i % 2 === 0 ? "bg-[#d9e1f2]" : "bg-white"}`}
          />
        </div>
      ))}
      <Chart />
    </div>
  );
}

function ScrollButton({ up, className }: { up?: boolean; className: string }) {
  return (
    <div className={`flex shrink-0 items-center justify-center border-2 border-[#808080] bg-[#d0d0d0] ${className}`}>
      <span className={up ? "rotate-180" : ""}>
        <DownTri c="#222222" w={12} />
      </span>
    </div>
  );
}

function VerticalScroll() {
  return (
    <div className="mt-[18px] ml-[2px] flex w-[27px] shrink-0 flex-col bg-[#444444]">
      <ScrollButton up className="h-[24px] w-[27px]" />
      <div className="mt-[35px] h-[56px] w-[27px] border-2 border-[#808080] bg-[#d0d0d0]" />
      <div className="flex-1" />
      <ScrollButton className="h-[24px] w-[27px]" />
    </div>
  );
}

function SheetTabs() {
  return (
    <div className="flex h-[41px] shrink-0 items-start border-t-2 border-[#a6a6a6]">
      <svg width="60" height="16" viewBox="0 0 60 16" className="mt-[10px] ml-[32px] shrink-0">
        <path d="M12 1 L6 8 L12 15 Z M46 1 L52 8 L46 15 Z" fill="#a0a0a0" />
      </svg>
      <div className="ml-[52px] flex h-[37px] w-[100px] items-center justify-center border-b-2 border-[#217346] bg-white text-[23.5px] leading-[26px] text-[#217346]">
        Sheet1
      </div>
      <svg width="24" height="24" viewBox="0 0 24 24" className="mt-[7px] ml-[51px] shrink-0">
        <circle cx="12" cy="12" r="10" fill="none" stroke="#fff" strokeWidth="1.5" />
        <path d="M7 12 H17 M12 7 V17" stroke="#fff" strokeWidth="1.5" />
      </svg>
      <div className="ml-[744px] flex h-[34px] w-[12px] flex-col items-center justify-center gap-[4px]">
        <i className="h-[3px] w-[3px] bg-white" />
        <i className="h-[3px] w-[3px] bg-white" />
        <i className="h-[3px] w-[3px] bg-white" />
      </div>
      <div className="mt-[5px] ml-[17px] flex h-[27px] w-[656px] bg-[#444444]">
        <div className="flex w-[26px] items-center justify-center border-2 border-[#808080] bg-[#d0d0d0]">
          <span className="rotate-90"><DownTri c="#222222" w={12} /></span>
        </div>
        <div className="ml-[76px] w-[200px] border-2 border-[#808080] bg-[#d0d0d0]" />
        <div className="flex-1" />
        <div className="flex w-[26px] items-center justify-center border-2 border-[#808080] bg-[#d0d0d0]">
          <span className="-rotate-90"><DownTri c="#222222" w={12} /></span>
        </div>
      </div>
    </div>
  );
}

function Radio({ on, label, className }: { on?: boolean; label: ReactNode; className: string }) {
  return (
    <div className={`flex items-center pl-[52px] ${className}`}>
      {on ? (
        <span className="h-[20px] w-[20px] shrink-0 rounded-full border-[5px] border-[#217346] bg-white" />
      ) : (
        <span className="h-[20px] w-[20px] shrink-0 rounded-full border-2 border-[#7c7c7c] bg-[#d0d0d0]" />
      )}
      <span className="ml-[10px] text-[20px] leading-[24px] whitespace-nowrap text-[#f2f2f2]">{label}</span>
    </div>
  );
}

function Accel({ text }: { text: string }) {
  const m = text.match(/^(.*\()(.)(\))$/);
  if (!m) return <>{text}</>;
  return (
    <>
      {m[1]}
      <span className="underline underline-offset-2">{m[2]}</span>
      {m[3]}
    </>
  );
}

function Heading({ title, className }: { title: string; className: string }) {
  return (
    <div className={`flex h-[40px] items-center ${className}`}>
      <svg width="14" height="9" viewBox="0 0 14 9" className="ml-[29px] shrink-0">
        <path d="M1 1 L7 7 L13 1" fill="none" stroke="#e8e8e8" strokeWidth="1.5" />
      </svg>
      <span className="ml-[12px] text-[20px] leading-[24px] font-bold text-[#f2f2f2]">{title}</span>
    </div>
  );
}

function FormatPane() {
  return (
    <div className="flex w-[469px] shrink-0 flex-col pt-[27px] [font-family:'Noto_Sans_CJK_SC',sans-serif]">
      <div className="flex h-[46px] shrink-0 items-center pl-[15px]">
        <span className="text-[34.5px] leading-[44px] whitespace-nowrap text-[#f4f4f4]">设置数据系列格式</span>
        <svg width="22" height="12" viewBox="0 0 22 12" className="mt-[-6px] ml-[63px]">
          <path d="M1 1 L11 10 L21 1" fill="none" stroke="#f0f0f0" strokeWidth="1.4" />
        </svg>
        <svg width="16" height="16" viewBox="0 0 16 16" className="mt-[-6px] ml-[48px]">
          <path d="M1 1 L15 15 M15 1 L1 15" stroke="#f0f0f0" strokeWidth="1.4" />
        </svg>
      </div>
      <div className="mt-[25px] flex h-[42px] shrink-0 items-start pl-[24px]">
        <svg width="14" height="8" viewBox="0 0 14 8" className="mt-[10px] shrink-0">
          <path d="M0 0 H14 L7 8 Z" fill="#a8a8a8" />
        </svg>
        <div className="ml-[12px] h-[42px] w-[83px] border-b-[5px] border-white text-center text-[20px] leading-[26px] font-bold text-[#f2f2f2]">
          系列选项
        </div>
      </div>
      <div className="mt-[12px] flex h-[56px] shrink-0 items-center pl-[23px]">
        <div className="flex h-[46px] w-[46px] items-center justify-center bg-[#444444]">
          <svg width="38" height="36" viewBox="0 0 38 36">
            <path d="M18 8 L32 20 L17 34 L3 20 Z" fill="#0f6b3a" stroke="#e8e8e8" strokeWidth="1.4" />
            <path d="M16 14 V4 C16 0 22 0 22 4 V14" fill="none" stroke="#dddddd" strokeWidth="1.2" />
            <circle cx="19" cy="14" r="1.8" fill="#ffffff" />
            <path d="M24 6 C32 8 37 14 35 28 C33 22 31 14 24 6" fill="#f0f0f0" />
          </svg>
        </div>
        <svg width="36" height="38" viewBox="0 0 36 38" className="ml-[23px]">
          <path d="M18 2 L34 13 L28 31 H8 L2 13 Z M8 31 L5 37 M28 31 L31 37" fill="none" stroke="#a8a8a8" strokeWidth="1.6" />
        </svg>
        <svg width="34" height="34" viewBox="0 0 34 34" className="ml-[27px]">
          <path d="M1 10 H10 V33 H1 Z M12 1 H21 V33 H12 Z M24 6 H33 V33 H24 Z" fill="none" stroke="#a8a8a8" strokeWidth="1.6" />
        </svg>
      </div>
      <svg width="436" height="25" viewBox="0 0 436 25" className="ml-[16px] shrink-0">
        <path d="M0 23 H14 L24 10 L36 23 H434" fill="none" stroke="#a3a3a3" strokeWidth="1.6" />
      </svg>
      <div className="flex min-h-0 flex-1">
        <div className="flex w-[421px] shrink-0 flex-col">
          <div className="flex h-[48px] shrink-0 items-center">
            <svg width="18" height="10" viewBox="0 0 18 10" className="ml-[26px]">
              <path d="M1 8 L7 3 L10 5 L17 1" fill="none" stroke="#a8a8a8" />
            </svg>
            <span className="ml-[8px] w-[40px] text-[20px] leading-[24px] text-[#d0d0d0]">线条</span>
            <div className="ml-[28px] h-[28px] w-px bg-[#e0e0e0]" />
            <svg width="24" height="14" viewBox="0 0 24 14" className="ml-[9px]">
              <path d="M1 12 L8 5 L14 9 L23 2" fill="none" stroke="#c8c8c8" />
              <circle cx="8" cy="5" r="1.6" fill="#e0e0e0" />
              <circle cx="14" cy="9" r="1.6" fill="#e0e0e0" />
            </svg>
            <span className="ml-[6px] text-[20px] leading-[24px] font-bold text-[#f2f2f2]">标记</span>
          </div>
          <Heading title="标记选项" className="mt-[3px] shrink-0" />
          <Radio className="mt-[7px] h-[41px] shrink-0" label={<Accel text="自动(U)" />} />
          <Radio className="h-[41px] shrink-0" label={<Accel text="无(O)" />} />
          <Radio on className="h-[41px] shrink-0" label="内置" />
          <div className="mt-[11px] flex h-[37px] shrink-0 items-start pl-[76px]">
            <span className="w-[58px] text-[20px] leading-[24px] text-[#f2f2f2]">类型</span>
            <div className="flex h-[37px] w-[73px] items-center border-2 border-[#808080] bg-[#d0d0d0] pr-[8px] pl-[9px]">
              <span className="h-[13px] w-[13px] border-2 border-[#ed9a5a] bg-white" />
              <span className="ml-auto"><DownTri c="#222222" w={12} /></span>
            </div>
          </div>
          <div className="mt-[11px] flex h-[40px] shrink-0 items-start pl-[76px]">
            <span className="w-[58px] text-[20px] leading-[24px] text-[#f2f2f2]">大小</span>
            <div className="flex h-[40px] w-[120px] items-center border-2 border-[#808080] bg-[#d0d0d0] pr-[4px] pl-[9px]">
              <span className="text-[18px] leading-[22px] text-[#222222]">3</span>
              <div className="ml-auto flex flex-col gap-[6px]">
                <span className="rotate-180"><Chev c="#333333" /></span>
                <Chev c="#333333" />
              </div>
            </div>
          </div>
          <Heading title="填充" className="mt-[21px] shrink-0" />
          <div className="mt-[13px] flex shrink-0 flex-col">
            {fillOptions.map((o) => (
              <Radio key={o} className="h-[41px]" label={<Accel text={o} />} />
            ))}
            <Radio on className="h-[41px]" label={<Accel text="自动(U)" />} />
          </div>
          <div className="mt-[6px] ml-[52px] h-[2px] w-[364px] shrink-0 bg-[#a3a3a3]" />
          <div className="mt-[9px] flex h-[48px] shrink-0 items-center pl-[68px]">
            <span className="text-[20px] leading-[24px] text-[#f2f2f2]"><Accel text="颜色(C)" /></span>
            <div className="mr-[5px] ml-auto flex h-[48px] w-[77px] items-center border-2 border-[#808080] bg-[#d0d0d0] pl-[14px]">
              <svg width="28" height="28" viewBox="0 0 28 28">
                <path d="M13 4 L22 13 L13 20 L5 13 Z" fill="#fff" stroke="#222" />
                <path d="M11 7 V3 C11 1 15 1 15 3 V8" fill="none" stroke="#222" />
                <path d="M19 7 C24 9 25 12 24 18 C22 14 22 11 19 7" fill="#1f5fa8" />
                <rect x="1" y="22" width="26" height="6" fill="#ffffff" />
              </svg>
              <span className="ml-[9px]"><DownTri c="#222222" w={12} /></span>
            </div>
          </div>
          <Heading title="边框" className="mt-[22px] shrink-0" />
        </div>
        <div className="mt-[7px] flex h-[772px] w-[27px] shrink-0 flex-col bg-[#444444]">
          <ScrollButton up className="h-[25px] w-[27px]" />
          <div className="h-[346px] w-[27px] border-2 border-[#808080] bg-[#d0d0d0]" />
          <div className="flex-1" />
          <ScrollButton className="h-[26px] w-[27px]" />
        </div>
      </div>
    </div>
  );
}

function StatusBar() {
  return (
    <div className="flex h-[37px] shrink-0 items-center border-t-4 border-[#444444] text-[20.5px] leading-[24px] text-[#f2f2f2]">
      <span className="ml-[20px] whitespace-nowrap">就绪</span>
      <svg width="20" height="24" viewBox="0 0 20 24" className="ml-[35px] shrink-0">
        <circle cx="6" cy="5" r="4.5" fill="#e8e8e8" />
        <rect x="2" y="10" width="16" height="13" fill="#e8e8e8" />
        <path d="M3 13 H17 M3 17 H17 M3 20 H17 M7 10 V23 M12 10 V23" stroke="#666666" />
      </svg>
      <svg width="24" height="26" viewBox="0 0 24 26" className="ml-[30px] shrink-0">
        <path d="M9 3 C3 5 2 17 8 21" fill="none" stroke="#e8e8e8" strokeWidth="1.5" strokeDasharray="3 2" />
        <circle cx="14" cy="8" r="2" fill="#e8e8e8" />
        <path d="M7 11 H21 M14 11 V16 L9 24 M14 16 L20 24" fill="none" stroke="#e8e8e8" strokeWidth="1.6" />
      </svg>
      <span className="ml-[5px] font-bold whitespace-nowrap">辅助功能: 调查</span>
      <span className="ml-[870px] w-[223px] whitespace-nowrap">平均值: 99.63134715</span>
      <span className="w-[114px] whitespace-nowrap">计数: 301</span>
      <span className="w-[207px] whitespace-nowrap">求和: 29889.40415</span>
      <div className="flex h-full w-[67px] shrink-0 items-center justify-center bg-[#444444]">
        <svg width="20" height="20" viewBox="0 0 20 20">
          <path d="M1 1 H19 V19 H1 Z M1 7 H19 M1 13 H19 M7 1 V19 M13 1 V19" fill="none" stroke="#fff" />
        </svg>
      </div>
      <svg width="20" height="20" viewBox="0 0 20 20" className="ml-[22px] shrink-0">
        <path d="M1 1 H19 V19 H1 Z M6 5 H14 V15 H6 Z M6 8 H14 M6 11 H14" fill="none" stroke="#e0e0e0" />
      </svg>
      <svg width="20" height="20" viewBox="0 0 20 20" className="ml-[46px] shrink-0">
        <path d="M1 1 H19 V19 H1 Z" fill="none" stroke="#f0f0f0" />
        <path d="M1 1 H9 V12 H1 Z M11 1 H19 V12 H11 Z" fill="#f0f0f0" />
      </svg>
      <div className="ml-[30px] h-[2px] w-[12px] shrink-0 bg-[#e0e0e0]" />
      <div className="relative ml-[10px] h-[2px] w-[163px] shrink-0 bg-white">
        <span className="absolute top-[-3px] left-[80px] h-[8px] w-[2px] bg-white" />
        <span className="absolute top-[-8px] left-[90px] h-[18px] w-[8px] bg-white" />
      </div>
      <svg width="14" height="14" viewBox="0 0 14 14" className="ml-[8px] shrink-0">
        <path d="M0 7 H14 M7 0 V14" stroke="#e0e0e0" strokeWidth="1.4" />
      </svg>
      <span className="ml-[22px] text-[22px] whitespace-nowrap">145%</span>
    </div>
  );
}

// Red callouts added to the screenshot on top of the pane.
function Annotations() {
  const box = "pointer-events-none absolute border-[5px] border-[#c81a05]";
  const num = "pointer-events-none absolute text-[33px] leading-[36px] font-bold text-[#c81a05] [font-family:'Liberation_Sans',sans-serif] [-webkit-text-stroke:0.8px_#ffffff] [paint-order:stroke_fill]";
  return (
    <>
      <div className={`${box} top-[474px] left-[1798px] h-[56px] w-[56px]`} />
      <div className={`${box} top-[557px] left-[1901px] h-[43px] w-[88px]`} />
      <div className={`${box} top-[651px] left-[1822px] h-[44px] w-[119px]`} />
      <div className={`${box} top-[734px] left-[1822px] h-[43px] w-[119px]`} />
      <div className={`${box} top-[773px] left-[1845px] h-[113px] w-[194px]`} />
      <span className={`${num} top-[484px] left-[1766px]`}>1</span>
      <span className={`${num} top-[557px] left-[1863px]`}>2</span>
      <span className={`${num} top-[653px] left-[1784px]`}>3</span>
      <span className={`${num} top-[736px] left-[1784px]`}>4</span>
      <span className={`${num} top-[843px] left-[1807px]`}>5</span>
    </>
  );
}

export default function App() {
  return (
    <div className="relative flex h-[1404px] w-[2249px] flex-col overflow-hidden bg-[#666666] pt-[2px] [font-family:Lato,'Noto_Sans_CJK_SC',sans-serif]">
      <div className="relative flex shrink-0 flex-col bg-[#444444]">
        <Crystals />
        <TitleBar />
        <TabBar />
      </div>
      <Ribbon />
      <FormulaBar />
      <div className="flex min-h-0 flex-1">
        <div className="flex w-[1778px] shrink-0 flex-col">
          <div className="flex min-h-0 flex-1">
            <div className="flex w-[1746px] shrink-0 flex-col">
              <ColumnHeaders />
              <SheetGrid />
            </div>
            <VerticalScroll />
          </div>
          <SheetTabs />
        </div>
        <div className="flex flex-1 border-l-2 border-[#484848]">
          <FormatPane />
        </div>
      </div>
      <StatusBar />
      <div className="h-[3px] shrink-0 bg-[#a8a8a8]" />
      <Annotations />
      <div className="pointer-events-none absolute inset-0 border-x-2 border-t-2 border-[#a0a0a0]" />
    </div>
  );
}
